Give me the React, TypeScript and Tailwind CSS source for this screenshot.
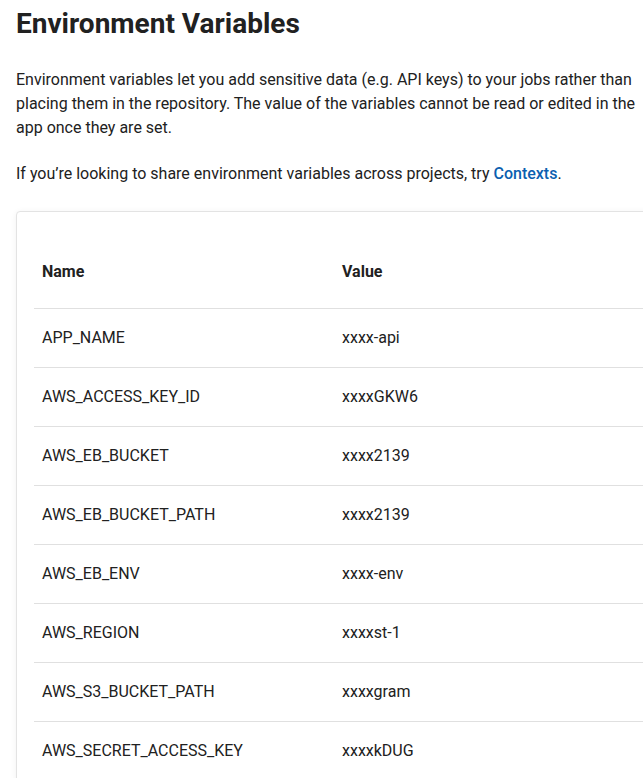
const rows = [
  { name: "APP_NAME", value: "xxxx-api" },
  { name: "AWS_ACCESS_KEY_ID", value: "xxxxGKW6" },
  { name: "AWS_EB_BUCKET", value: "xxxx2139" },
  { name: "AWS_EB_BUCKET_PATH", value: "xxxx2139" },
  { name: "AWS_EB_ENV", value: "xxxx-env" },
  { name: "AWS_REGION", value: "xxxxst-1" },
  { name: "AWS_S3_BUCKET_PATH", value: "xxxxgram" },
  { name: "AWS_SECRET_ACCESS_KEY", value: "xxxxkDUG" },
];

export default function App() {
  return (
    <div className="h-[778px] w-[643px] overflow-hidden bg-white font-['Roboto',sans-serif] text-[#212121]">
      <div className="pl-4">
        <h1 className="pt-[6px] text-[28px] font-bold leading-[36px]">Environment Variables</h1>

        <p className="mt-[26px] w-[640px] text-base leading-6">
          Environment variables let you add sensitive data (e.g. API keys) to your jobs rather than placing them in the
          repository. The value of the variables cannot be read or edited in the app once they are set.
        </p>

        <p className="mt-[22px] text-base leading-6">
          If you’re looking to share environment variables across projects, try{" "}
          <a className="font-medium text-[#0b5fb0]">Contexts</a>.
        </p>

        <div className="mt-[25px] w-[700px] rounded border border-[#e3e3e3] bg-white px-[17px] pt-6 shadow-[0_1px_6px_rgba(0,0,0,0.06)]">
          <table className="w-full border-collapse text-left text-base">
            <thead>
              <tr className="h-[72px] border-b border-[#e0e0e0]">
                <th className="w-[300px] pl-2 font-bold">Name</th>
                <th className="pl-2 font-bold">Value</th>
              </tr>
            </thead>
            <tbody>
              {rows.map((row) => (
                <tr key={row.name} className="h-[59px] border-b border-[#e0e0e0]">
                  <td className="pl-2 font-normal">{row.name}</td>
                  <td className="pl-2 font-normal">{row.value}</td>
                </tr>
              ))}
            </tbody>
          </table>
        </div>
      </div>
    </div>
  );
}
